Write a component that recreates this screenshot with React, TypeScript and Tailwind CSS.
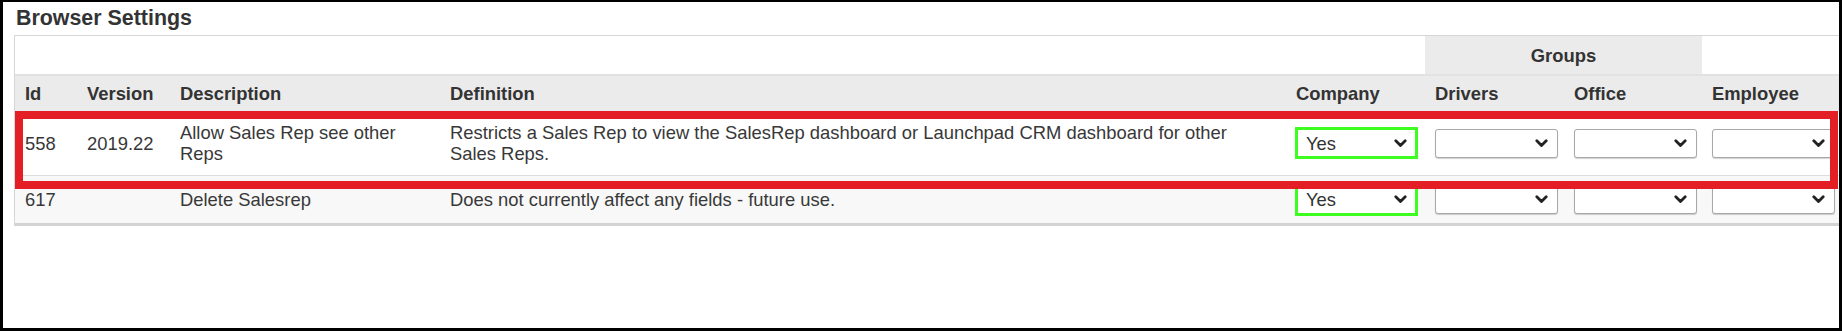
import React from "react";

const Chevron = () => (
  <svg width="13" height="9" viewBox="0 0 13 9" className="shrink-0">
    <polyline
      points="1.8,1.8 6.5,6.6 11.2,1.8"
      fill="none"
      stroke="#222"
      strokeWidth="2.8"
      strokeLinecap="round"
      strokeLinejoin="round"
    />
  </svg>
);

function Select({ value, highlight }: { value?: string; highlight?: boolean }) {
  if (highlight) {
    return (
      <div className="w-[123px] h-[32px] border-[3px] border-[#3dff1f] bg-white flex items-center justify-between pl-[8px] pr-[8px]">
        <span className="text-[#333]">{value}</span>
        <Chevron />
      </div>
    );
  }
  return (
    <div className="w-[123px] h-[29px] border border-[#a8a8a8] rounded-[3px] bg-white shadow-[0_1px_1px_rgba(0,0,0,0.18)] flex items-center justify-end pr-[9px]">
      <Chevron />
    </div>
  );
}

const cols = "grid grid-cols-[62px_93px_270px_846px_139px_139px_138px_140px]";

export default function App() {
  const rows = [
    {
      id: "558",
      version: "2019.22",
      desc: "Allow Sales Rep see other Reps",
      def: "Restricts a Sales Rep to view the SalesRep dashboard or Launchpad CRM dashboard for other Sales Reps.",
      cls: "h-[65px] bg-white border-b border-[#dcdcdc]",
    },
    {
      id: "617",
      version: "",
      desc: "Delete Salesrep",
      def: "Does not currently affect any fields - future use.",
      cls: "h-[50px] bg-[#f8f8f8] border-b-[3px] border-[#d3d3d3]",
    },
  ];

  return (
    <div className="relative w-[1842px] h-[331px] overflow-hidden bg-white border-[3px] border-t-2 border-black font-['Liberation_Sans',Arial,sans-serif] text-[#383838]">
      <div className="h-[33px] flex items-center pl-[13px] text-[21.4px] font-bold text-[#333]">
        Browser Settings
      </div>

      <div className="ml-[11px] w-[1840px] border-t border-l border-[#d6d6d6] text-[18.4px] leading-[21px]">
        {/* group header row */}
        <div className={`${cols} h-[40px] border-b-2 border-[#e2e2e2] bg-white`}>
          <div className="col-span-5" />
          <div className="col-span-2 bg-[#ebebeb] flex items-center justify-center font-bold text-[#333]">
            Groups
          </div>
          <div />
        </div>

        {/* column header row */}
        <div className={`${cols} h-[35px] bg-[#ebebeb] font-bold items-center text-[#333]`}>
          <div className="pl-[10px]">Id</div>
          <div className="pl-[10px]">Version</div>
          <div className="pl-[10px]">Description</div>
          <div className="pl-[10px]">Definition</div>
          <div className="pl-[10px]">Company</div>
          <div className="pl-[10px]">Drivers</div>
          <div className="pl-[10px]">Office</div>
          <div className="pl-[10px]">Employee</div>
        </div>

        {rows.map((r) => (
          <div key={r.id} className={`${cols} ${r.cls} items-center`}>
            <div className="pl-[10px]">{r.id}</div>
            <div className="pl-[10px]">{r.version}</div>
            <div className="pl-[10px] pr-[10px]">{r.desc}</div>
            <div className="pl-[10px] pr-[10px]">{r.def}</div>
            <div className="pl-[9px]">
              <Select value="Yes" highlight />
            </div>
            <div className="pl-[10px]">
              <Select />
            </div>
            <div className="pl-[10px]">
              <Select />
            </div>
            <div className="pl-[10px]">
              <Select />
            </div>
          </div>
        ))}
      </div>

      {/* red annotation box */}
      <div className="absolute left-[12px] top-[109px] w-[1823px] h-[78px] border-[8px] border-[#e31e24] pointer-events-none" />
    </div>
  );
}
